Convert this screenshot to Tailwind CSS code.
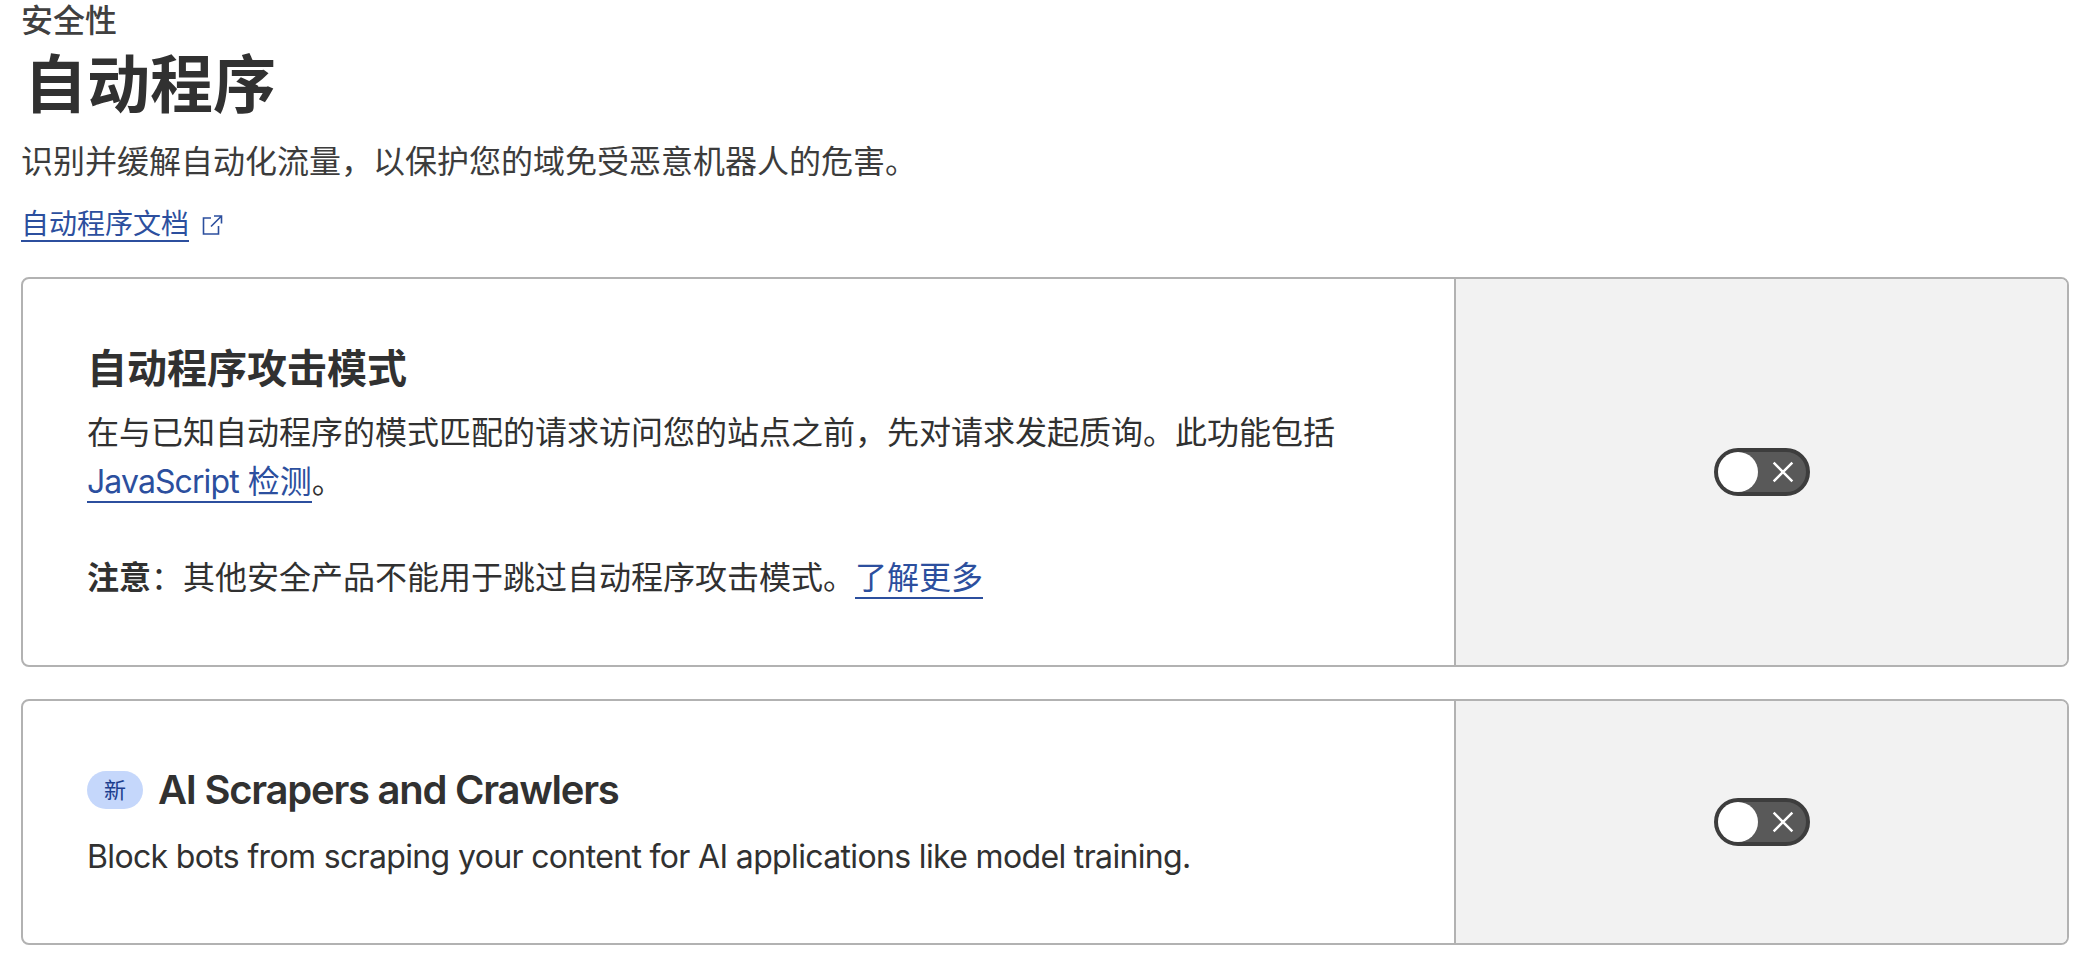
<!DOCTYPE html>
<html lang="zh-CN">
<head>
  <meta charset="utf-8" />
  <title>自动程序</title>
  <script src="https://cdn.jsdelivr.net/npm/@tailwindcss/browser@4"></script>
</head>
<body class="bg-white text-[#313131] font-['Inter','Noto_Sans_CJK_SC',sans-serif] overflow-hidden">
  <main class="w-[2082px] h-[970px] pl-[21px] pr-[13px]">
    <div class="text-[32px] leading-[42px] h-[40px] font-medium text-[#404040]">安全性</div>
    <h1 class="text-[63px] leading-[89px] h-[100px] font-semibold pl-[3px]">自动程序</h1>
    <p class="text-[32px] leading-[44px] h-[63px] text-[#3c3c3c]">识别并缓解自动化流量，以保护您的域免受恶意机器人的危害。</p>
    <div class="flex items-center gap-[11px] h-[44px]">
      <a href="#" class="text-[28px] leading-[32px] text-[#2c4f9e] border-b-2 border-[#2c4f9e]">自动程序文档</a>
      <svg class="w-[24px] h-[24px] text-[#2c4f9e]" viewBox="0 0 24 24" fill="none" stroke="currentColor" stroke-width="1.6">
        <path d="M11 5H3.5v16h15v-8" />
        <path d="M14 3h7.5v7.5M21.5 3 11 13.5" />
      </svg>
    </div>

    <section class="mt-[30px] flex h-[390px] rounded-[8px] border-2 border-[#b2b2b2] overflow-hidden">
      <div class="w-[1431px] pl-[64px] pt-[65px]">
        <h2 class="text-[40px] leading-[50px] font-semibold">自动程序攻击模式</h2>
        <p class="mt-[14px] text-[32px] leading-[49px] w-[1270px]">在与已知自动程序的模式匹配的请求访问您的站点之前，先对请求发起质询。此功能包括 <a href="#" class="text-[#2c4f9e] border-b-2 border-[#2c4f9e]"><span class="tracking-[-0.9px]">JavaScript</span> 检测</a>。</p>
        <p class="mt-[47px] text-[32px] leading-[49px]"><span class="font-semibold">注意</span>：其他安全产品不能用于跳过自动程序攻击模式。<a href="#" class="text-[#2c4f9e] border-b-2 border-[#2c4f9e]">了解更多</a></p>
      </div>
      <div class="flex-1 bg-[#f2f2f2] border-l-2 border-[#b2b2b2] flex items-center justify-center">
        <div class="w-[96px] h-[48px] rounded-full bg-[#595959] border-[4px] border-[#3d3d3d] flex items-center justify-between">
          <span class="w-[40px] h-[40px] rounded-full bg-white"></span>
          <svg class="w-[22px] h-[22px] mr-[12px]" viewBox="0 0 20 20" fill="none" stroke="white" stroke-width="2.2"><path d="M1.5 1.5l17 17M18.5 1.5l-17 17" /></svg>
        </div>
      </div>
    </section>

    <section class="mt-[32px] flex h-[246px] rounded-[8px] border-2 border-[#b2b2b2] overflow-hidden">
      <div class="w-[1431px] pl-[64px] pt-[65px]">
        <div class="flex items-center gap-[15px] h-[48px]">
          <span class="w-[56px] h-[38px] rounded-full bg-[#c5d7fb] text-[#1d3f8f] text-[22px] flex items-center justify-center">新</span>
          <h2 class="text-[40px] leading-[48px] font-semibold tracking-[-1.25px]">AI Scrapers and Crawlers</h2>
        </div>
        <p class="mt-[21px] text-[32px] leading-[44px] tracking-[-0.65px]">Block bots from scraping your content for AI applications like model training.</p>
      </div>
      <div class="flex-1 bg-[#f2f2f2] border-l-2 border-[#b2b2b2] flex items-center justify-center">
        <div class="w-[96px] h-[48px] rounded-full bg-[#595959] border-[4px] border-[#3d3d3d] flex items-center justify-between">
          <span class="w-[40px] h-[40px] rounded-full bg-white"></span>
          <svg class="w-[22px] h-[22px] mr-[12px]" viewBox="0 0 20 20" fill="none" stroke="white" stroke-width="2.2"><path d="M1.5 1.5l17 17M18.5 1.5l-17 17" /></svg>
        </div>
      </div>
    </section>
  </main>
</body>
</html>
